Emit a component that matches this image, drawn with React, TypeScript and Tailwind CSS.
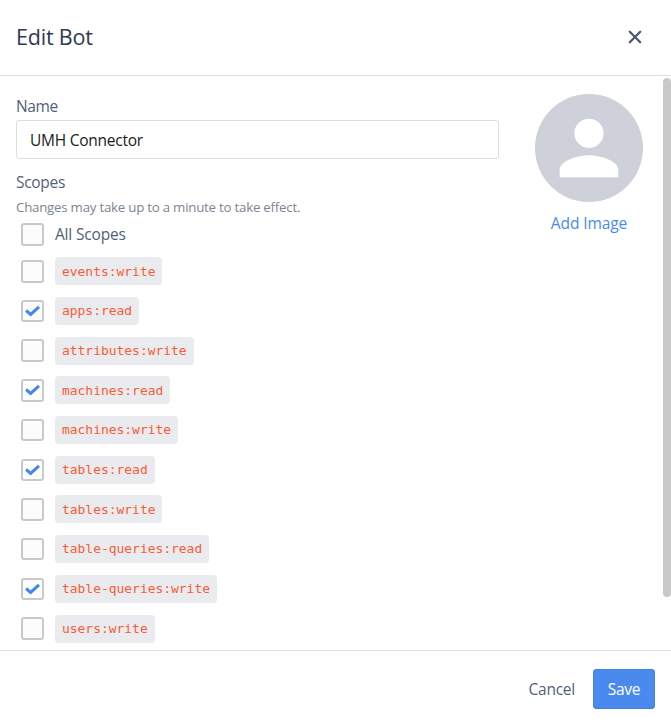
import React from "react";

const scopes = [
  { name: "events:write", on: false },
  { name: "apps:read", on: true },
  { name: "attributes:write", on: false },
  { name: "machines:read", on: true },
  { name: "machines:write", on: false },
  { name: "tables:read", on: true },
  { name: "tables:write", on: false },
  { name: "table-queries:read", on: false },
  { name: "table-queries:write", on: true },
  { name: "users:write", on: false },
];

function Checkbox({ checked }: { checked: boolean }) {
  return (
    <span
      role="checkbox"
      aria-checked={checked}
      className="flex h-[22.5px] w-[23px] shrink-0 items-center justify-center rounded-[3px] border-2 border-[#c9c9c9] bg-[#fcfcfc]"
    >
      {checked && (
        <svg width="15" height="12" viewBox="0 0 15 12" fill="none" className="-ml-px shrink-0">
          <path d="M1.1 5.5 L5.6 9.4 L14 1.8" stroke="#4287f0" strokeWidth="3" />
        </svg>
      )}
    </span>
  );
}

export default function App() {
  return (
    <div className="flex h-[726px] w-[671px] flex-col overflow-hidden bg-white font-['Open_Sans','Noto_Sans',sans-serif] text-[15.5px] text-[#525f7a]">
      <header className="flex h-[76px] shrink-0 items-center justify-between border-b border-[#dfe0e3] pr-[29px] pb-[2px] pl-4">
        <h1 className="text-[21.5px] leading-[30px] tracking-[-0.2px] text-[#2e3a52]">Edit Bot</h1>
        <button aria-label="Close" className="flex">
          <svg width="14" height="14" viewBox="0 0 14 14" fill="none" stroke="#4a5872" strokeWidth="2.3" strokeLinecap="round">
            <path d="M1.8 1.8 L12.2 12.2 M12.2 1.8 L1.8 12.2" />
          </svg>
        </button>
      </header>

      <main className="flex min-h-0 flex-1 overflow-hidden pl-4">
        <section className="w-[483px] shrink-0 pt-[18px]">
          <label className="block h-[26px] leading-[24px] tracking-[-0.35px]">Name</label>
          <input
            defaultValue="UMH Connector"
            className="block h-[39px] w-full rounded-[3px] border border-[#dcdee4] pl-[13px] text-[15.5px] tracking-[-0.25px] text-[#212121] outline-none"
          />
          <h2 className="mt-[11px] leading-6 tracking-[-0.3px]">Scopes</h2>
          <p className="h-[28px] text-[13.25px] leading-[26px] tracking-[-0.22px] text-[#7d8594]">
            Changes may take up to a minute to take effect.
          </p>
          <div className="flex h-[29px] items-center gap-[11px] pb-[4px] pl-[5px]">
            <Checkbox checked={false} />
            <span className="tracking-[-0.18px]">All Scopes</span>
          </div>
          <ul className="pt-[0.5px]">
            {scopes.map((scope) => (
              <li key={scope.name} className="flex h-[39.7px] items-center gap-[11px] pl-[5px]">
                <Checkbox checked={scope.on} />
                <code className="flex h-7 items-center rounded-[4px] bg-[#eaebef] px-[7px] font-['DejaVu_Sans_Mono',monospace] text-[12.95px] text-[#f85c36]">
                  {scope.name}
                </code>
              </li>
            ))}
          </ul>
        </section>
        <aside className="ml-9 flex w-[108px] shrink-0 flex-col items-center pt-[18px]">
          <div className="flex h-[108px] w-[108px] items-center justify-center rounded-full bg-[#ced1d9]">
            <svg width="88" height="88" viewBox="0 0 24 24" fill="#fff">
              <path d="M12 12c2.21 0 4-1.79 4-4s-1.79-4-4-4-4 1.79-4 4 1.79 4 4 4zm0 2c-2.67 0-8 1.34-8 4v2h16v-2c0-2.66-5.33-4-8-4z" />
            </svg>
          </div>
          <button className="mt-[9px] leading-6 tracking-[-0.1px] text-[#4a8aed]">Add Image</button>
        </aside>
        <div className="mt-[2px] ml-auto h-[519px] w-2 shrink-0 rounded-full bg-[#c9c9c9]" />
      </main>

      <footer className="flex h-[76px] shrink-0 items-center justify-end gap-[18px] border-t border-[#dfe0e3] pr-4">
        <button className="pt-[2px] tracking-[-0.25px]">Cancel</button>
        <button className="h-10 w-[62px] rounded-[3px] border border-[#4381e2] bg-[#4a8aee] pt-[2px] tracking-[-0.25px] text-white">
          Save
        </button>
      </footer>
    </div>
  );
}
